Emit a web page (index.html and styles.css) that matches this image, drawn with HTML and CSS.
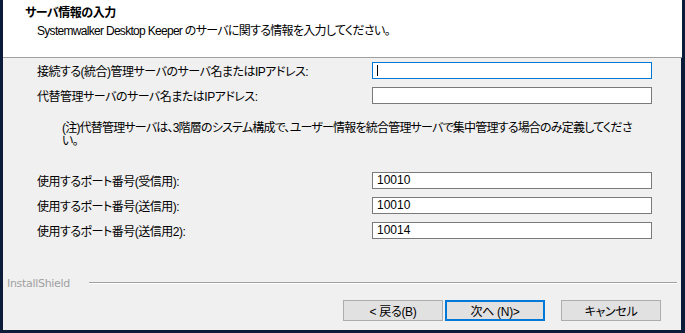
FILE: index.html
```html
<!DOCTYPE html>
<html lang="ja">
  <head>
    <meta charset="UTF-8" />
    <title>サーバ情報の入力</title>
    <link rel="stylesheet" href="styles.css">
  </head>
  <body>
    <div class="dialog">
      <div class="dialog-header">
        <h1>サーバ情報の入力</h1>
        <p>Systemwalker Desktop Keeper のサーバに関する情報を入力してください。</p>
      </div>

      <div class="dialog-body">
        <div class="form-row">
          <span class="form-label">接続する(統合)管理サーバのサーバ名またはIPアドレス:</span>
          <div class="field focused"><span class="caret"></span></div>
        </div>
        <div class="form-row">
          <span class="form-label">代替管理サーバのサーバ名またはIPアドレス:</span>
          <div class="field"></div>
        </div>

        <p class="note">
          (注)代替管理サーバは、3階層のシステム構成で、ユーザー情報を統合管理サーバで集中管理する場合のみ定義してくださ<br />い。
        </p>

        <div class="form-row">
          <span class="form-label">使用するポート番号(受信用):</span>
          <div class="field">10010</div>
        </div>
        <div class="form-row">
          <span class="form-label">使用するポート番号(送信用):</span>
          <div class="field">10010</div>
        </div>
        <div class="form-row">
          <span class="form-label">使用するポート番号(送信用2):</span>
          <div class="field">10014</div>
        </div>
      </div>

      <div class="dialog-footer">
        <div class="brand">
          <span class="brand-name">InstallShield</span>
          <span class="brand-line"></span>
        </div>
        <div class="buttons">
          <button class="btn">&lt; 戻る(B)</button>
          <button class="btn default">次へ (N)&gt;</button>
          <button class="btn cancel">キャンセル</button>
        </div>
      </div>
    </div>
  </body>
</html>
```

FILE: styles.css
```css
* {
  margin: 0;
  padding: 0;
  box-sizing: border-box;
}

body {
  background: #0c1c38;
  font-family: "Liberation Sans", "Noto Sans CJK JP", sans-serif;
  font-size: 12px;
  font-feature-settings: "palt";
  letter-spacing: -0.5px;
  color: #000;
  width: 685px;
  height: 333px;
  overflow: hidden;
}

.dialog {
  width: 678px;
  height: 330px;
  margin-left: 3px;
  background: #f0f0f0;
  display: flex;
  flex-direction: column;
}

.dialog-header {
  height: 58px;
  background: #fff;
  border-bottom: 1px solid #a0a0a0;
  padding: 5px 0 0 22px;
  margin-right: -1px;
}

.dialog-header h1 {
  font-size: 12px;
  font-weight: bold;
  line-height: 16px;
}

.dialog-header p {
  margin-top: 2px;
  padding-left: 12px;
  line-height: 16px;
  letter-spacing: -0.7px;
}

.dialog-body {
  padding: 4px 0 0 34px;
}

.form-row {
  display: flex;
  align-items: center;
  height: 17px;
  margin-bottom: 8px;
}

.form-label {
  width: 335px;
  white-space: nowrap;
}

.field {
  width: 280px;
  height: 17px;
  background: #fff;
  border: 1px solid #7a7a7a;
  padding: 0 0 0 4px;
  font-size: 12px;
  line-height: 15px;
  letter-spacing: 0;
  display: flex;
  align-items: center;
}

.field.focused {
  border-color: #0078d7;
}

.caret {
  display: inline-block;
  width: 1px;
  height: 11px;
  background: #000;
}

.note {
  margin: 18px 0 24px 25px;
  line-height: 13px;
  letter-spacing: -0.8px;
  white-space: nowrap;
}

.dialog-footer {
  margin-top: auto;
  padding-bottom: 9px;
}

.brand {
  display: flex;
  align-items: center;
  height: 14px;
  padding: 0 4px;
  margin-bottom: 10px;
}

.brand-name {
  width: 82px;
  color: #a0a0a0;
  font-family: "DejaVu Sans", "Noto Sans", sans-serif;
  font-size: 11px;
  letter-spacing: -0.3px;
}

.brand-line {
  flex: 1;
  height: 2px;
  border-top: 1px solid #a0a0a0;
  border-bottom: 1px solid #fff;
}

.buttons {
  display: flex;
  justify-content: flex-end;
  gap: 2px;
  padding-right: 20px;
}

.btn {
  width: 100px;
  height: 21px;
  background: #e1e1e1;
  border: 1px solid #adadad;
  font-family: inherit;
  font-size: 12px;
  font-feature-settings: "palt";
  letter-spacing: -0.3px;
  color: #000;
}

.btn.default {
  border: 2px solid #0078d7;
}

.btn.cancel {
  margin-left: 14px;
}
```
